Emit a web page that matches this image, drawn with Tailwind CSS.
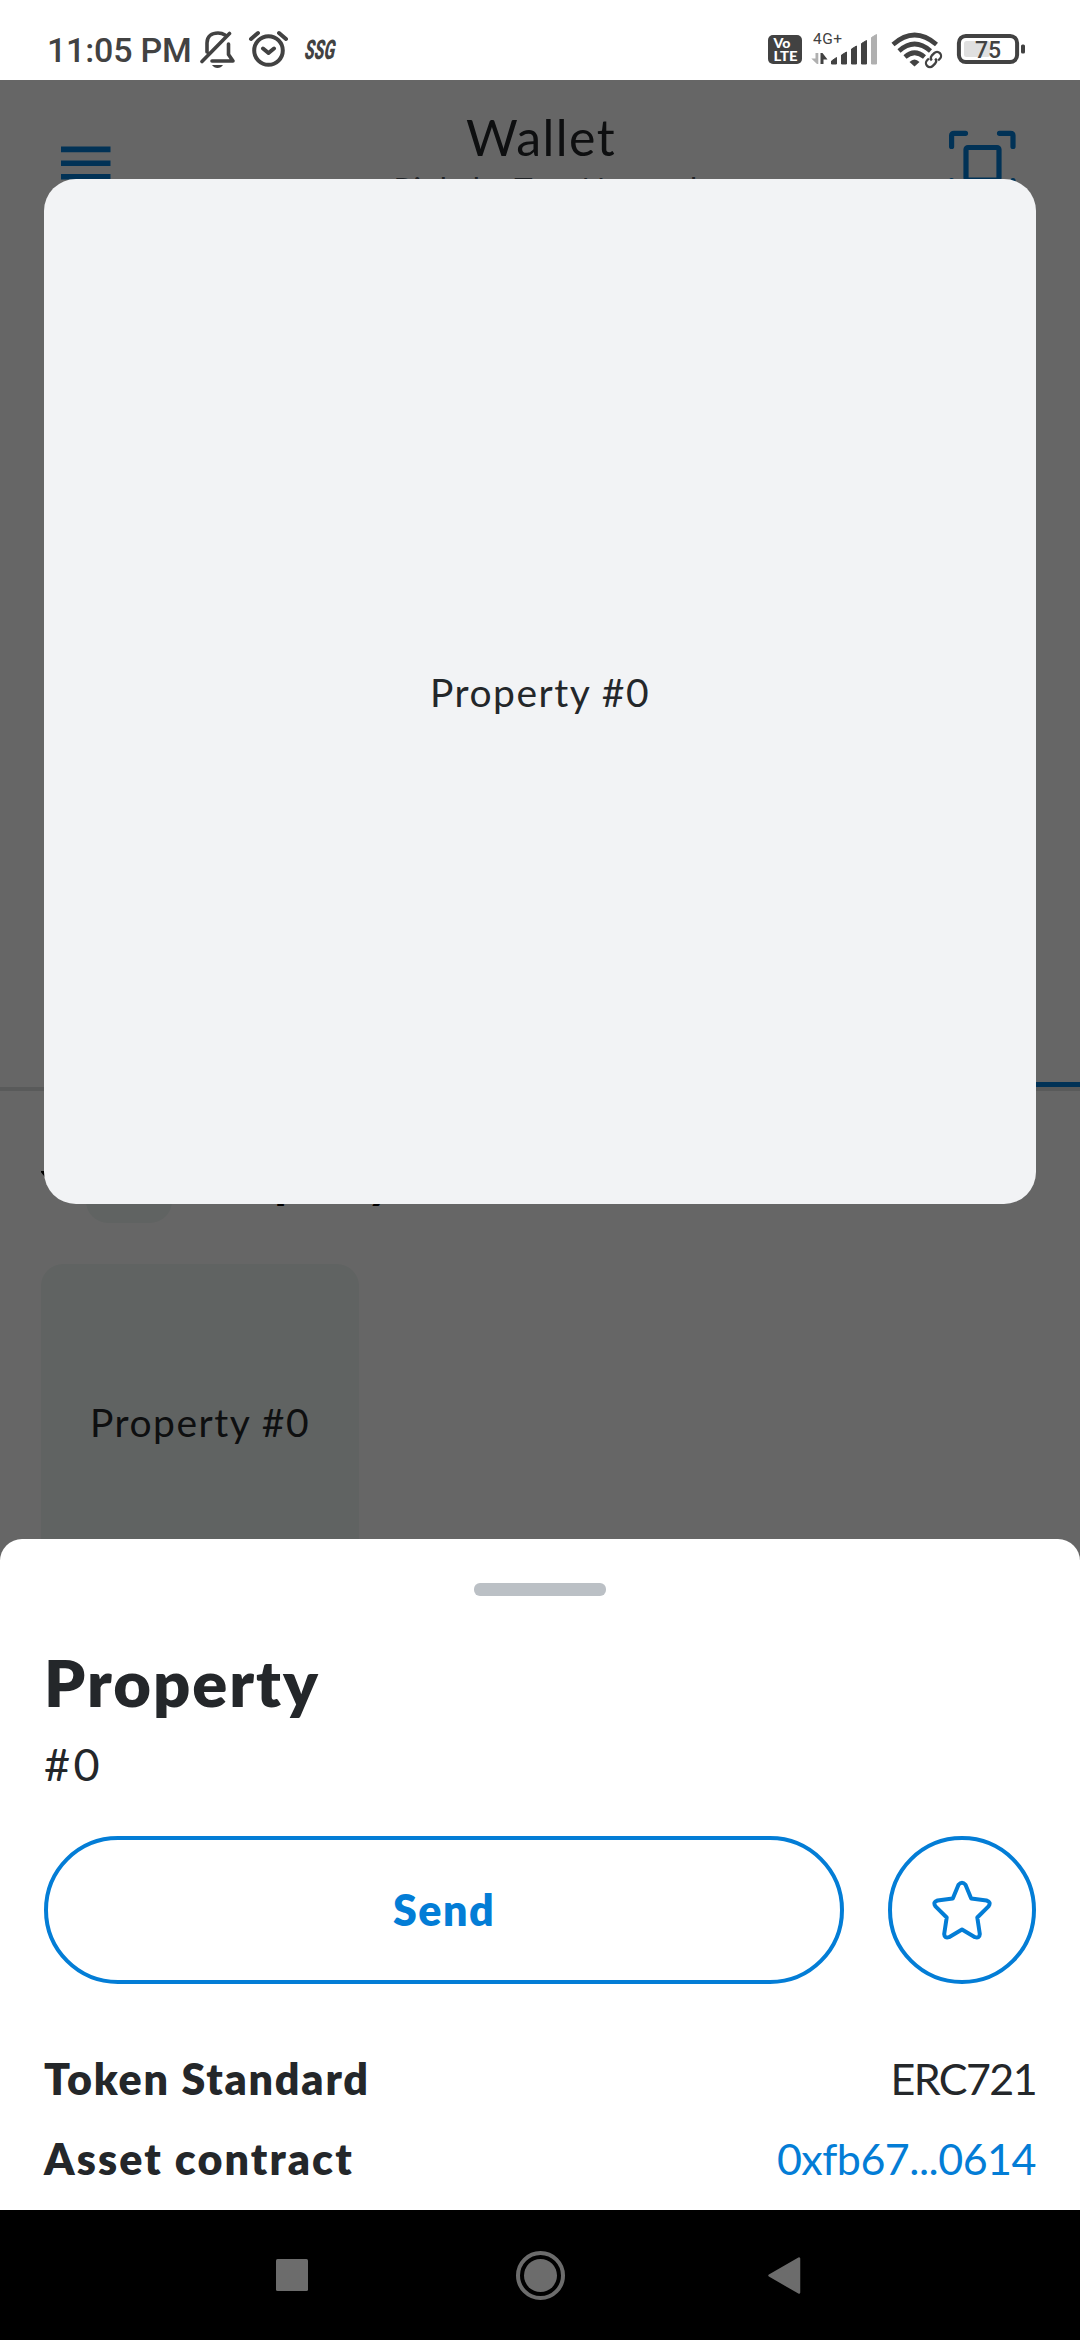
<!DOCTYPE html>
<html lang="en">
<head>
<meta charset="utf-8">
<title>Wallet</title>
<script src="https://cdn.jsdelivr.net/npm/@tailwindcss/browser@4"></script>
</head>
<body class="bg-black">
<div class="relative flex h-[2340px] w-[1080px] flex-col overflow-hidden bg-white font-['Lato',sans-serif] text-[#24272a]">

  <!-- Status bar -->
  <header class="relative z-20 flex h-20 shrink-0 items-start bg-white font-['Roboto',sans-serif] text-[#424242]">
    <div class="ml-[47px] mt-[30px] w-[153px] whitespace-nowrap text-[34px] font-medium leading-[40px] tracking-[-0.2px]">11:05 PM</div>
    <svg class="mt-[30px] h-10 w-[36px] shrink-0" viewBox="200 30 36 40" fill="none" stroke="#424242" stroke-width="3.6" stroke-linecap="round" stroke-linejoin="round">
      <path d="M207 52V43C207 36 212 33 218 33Q222 33 225 35M202 61.500L229.500 33.500M212 61H233L228.500 54.500V44"/>
      <path d="M212 65H223Q221 68 217.500 68T212 65Z" fill="#424242" stroke="none"/>
    </svg>
    <svg class="ml-[12px] mt-[30px] h-10 w-[42px] shrink-0" viewBox="248 30 42 40" fill="none" stroke="#424242" stroke-width="4" stroke-linecap="round" stroke-linejoin="round">
      <circle cx="268.500" cy="50.500" r="14.300"/><path d="M263 48.500L268.500 53L274 48.500M251 39L258 33M286 39L279 33"/>
    </svg>
    <svg class="ml-[10px] mt-[20px] h-[60px] w-[60px] shrink-0" viewBox="300 20 60 60"><text transform="translate(303.500 58.500) skewX(-12)" textLength="30" lengthAdjust="spacingAndGlyphs" font-family="Roboto" font-weight="900" font-size="27" fill="#424242">SSG</text></svg>
    <svg class="ml-auto mt-[30px] h-10 w-[262px] shrink-0" viewBox="766 30 262 40">
      <rect x="768" y="35" width="34" height="29" rx="5" fill="#424242"/>
      <text x="773.500" y="48" font-family="Lato" font-weight="900" font-size="12.500" textLength="17" lengthAdjust="spacingAndGlyphs" fill="#fff">Vo</text>
      <text x="773.500" y="60.800" font-family="Lato" font-weight="900" font-size="13.500" textLength="24" lengthAdjust="spacingAndGlyphs" fill="#fff">LTE</text>
      <text x="813" y="44" font-family="Roboto" font-size="15.500" textLength="29" fill="#424242">4G+</text>
      <path d="M815.500 53H818.300V64H817L811.300 58.500H815.500Z" fill="#b0b0b0"/>
      <path d="M820.500 53H822.500L827.500 59.500H823.500V64H820.500Z" fill="#424242"/>
      <g fill="#424242" stroke="#424242" stroke-linejoin="round">
        <path d="M831.500 61L836.500 57.500V64H831.500Z"/><path d="M841.500 55L846.500 52V64H841.500Z"/><path d="M851.500 49L856.500 46V64H851.500Z"/><path d="M861.500 43.500L866.500 40.500V64H861.500Z"/>
      </g>
      <path d="M871.500 37.500L876.500 34.500V64H871.500Z" fill="#b0b0b0" stroke="#b0b0b0" stroke-linejoin="round"/>
      <g fill="none" stroke="#424242" stroke-width="4.600">
        <path d="M893 44.500Q914.500 25.500 936.500 44.500M899 51Q914.500 37 930.500 51M905 57Q914.500 48.500 924.500 57"/>
      </g>
      <path d="M909.500 62Q914.500 57 919.500 62L914.500 66.500Z" fill="#424242"/>
      <g fill="none" stroke="#424242" stroke-width="2.300" transform="rotate(-45 933.500 59.500)">
        <path d="M931 55.500H928.500A4 4 0 0 0 928.500 63.500H932A4 4 0 0 0 935.500 60M936 63.500H938.500A4 4 0 0 0 938.500 55.500H935A4 4 0 0 0 931.500 59"/>
      </g>
      <rect x="958.900" y="35.900" width="58.200" height="26.200" rx="7" fill="none" stroke="#424242" stroke-width="4"/>
      <rect x="964" y="41" width="26" height="16" rx="2.500" fill="#e0e0e0"/>
      <rect x="1021" y="44.500" width="4" height="9" rx="1.500" fill="#424242"/>
      <text x="975" y="58" font-family="Roboto" font-weight="500" font-size="23" textLength="26" fill="#424242">75</text>
    </svg>
    <div class="w-[52px] shrink-0"></div>
  </header>

  <!-- Wallet screen under the scrim -->
  <main class="relative h-[1480px] shrink-0">
    <div class="flex h-[1002px] items-start justify-between">
      <svg class="ml-[61px] mt-[66px] h-9 w-[50px]" viewBox="0 0 50 36" fill="#037dd6"><path d="M0 .6H49.500V6.200H0ZM0 14.400H49.500V20H0ZM0 28H49.500V33.600H0Z"/></svg>
      <div class="flex flex-col items-center pt-[25px] pl-[23px]">
        <h1 class="text-[50px] leading-[64px] tracking-[1.4px]">Wallet</h1>
        <p class="pl-[18px] text-[31px] leading-[38px] tracking-[0.8px] text-[#535a61]">Rinkeby Test Network</p>
      </div>
      <svg class="mr-[62px] mt-[49px] h-[70px] w-[70px]" viewBox="0 0 70 70" fill="none" stroke="#037dd6" stroke-width="5.200" stroke-linecap="round" stroke-linejoin="round">
        <path d="M3.600 17.500V6.600Q3.600 4.300 6 4.300H17.500M51.500 4.300H62.500Q65 4.300 65 6.600V17.500M3.600 51.500V66H17.500M51.500 66H65V51.500"/><rect x="18" y="18.500" width="33" height="32.500" rx="2"/>
      </svg>
    </div>
    <div class="flex h-[9px] justify-end border-b-4 border-[#dfe0e2]"><div class="h-[5px] w-[540px] bg-[#037dd6]"></div></div>
    <div class="flex h-[173px] items-start pt-[46px]">
      <svg class="ml-[41px] mt-[34px] h-4 w-5" viewBox="0 0 20 16"><path d="M1 1H19L10 12Z" fill="#000" stroke="#000" stroke-width="2"/></svg>
      <div class="ml-[25px] h-[86px] w-[86px] rounded-[22px] bg-[#f0f7f5]"></div>
      <div class="ml-[26px] mt-[22px] text-[43px] font-extrabold leading-[48px] tracking-[3px] text-black">Property</div>
    </div>
    <div class="ml-[41px] flex h-[320px] w-[318px] items-start justify-center rounded-[22px] bg-[#f0f7f5] pt-[134px]">
      <span class="text-[39px] leading-[48px] tracking-[1.5px]">Property #0</span>
    </div>
    <div class="absolute inset-0 bg-black/60"></div>
    <!-- Collectible preview -->
    <div class="absolute left-[44px] top-[99px] flex h-[1025px] w-[992px] items-center justify-center rounded-[32px] bg-[#f2f3f5]">
      <span class="text-[39px] leading-[48px] tracking-[1.5px]">Property #0</span>
    </div>
  </main>

  <!-- Details sheet -->
  <section class="relative z-10 -mt-[21px] flex h-[671px] shrink-0 flex-col rounded-t-[22px] bg-white px-[44px]">
    <div class="mx-auto mt-[44px] h-[13px] w-[132px] shrink-0 rounded-[6px] bg-[#bbc0c5]"></div>
    <h2 class="mt-[48px] text-[65px] font-extrabold leading-[76px] tracking-[2px]">Property</h2>
    <p class="mt-[17px] text-[45px] leading-[54px] tracking-[3.5px]">#0</p>
    <div class="mt-[45px] flex gap-[44px]">
      <button class="flex h-[148px] w-[800px] items-center justify-center rounded-full border-4 border-[#037dd6] text-[43px] font-extrabold tracking-[1.5px] text-[#037dd6]">Send</button>
      <button class="flex h-[148px] w-[148px] items-center justify-center rounded-full border-4 border-[#037dd6]">
        <svg class="h-[60px] w-[60px]" viewBox="0 0 60 60" fill="none" stroke="#037dd6" stroke-width="4" stroke-linejoin="round"><path d="M26.500 4.800Q30 .8 33.500 4.800L39.200 18.500L54.500 20.500Q59.500 22 56.500 26.300L45.300 37.500L47.800 54Q47.500 58.500 43 57.200L30 49.500L17 57.200Q12.500 58.500 12.200 54L14.700 37.500L3.500 26.300Q.5 22 5.500 20.500L20.800 18.500Z"/></svg>
      </button>
    </div>
    <dl class="mt-[68px] flex flex-col gap-[26px] text-[43px] leading-[54px]">
      <div class="flex justify-between"><dt class="font-extrabold tracking-[1.8px]">Token Standard</dt><dd class="tracking-[-1.6px]">ERC721</dd></div>
      <div class="flex justify-between"><dt class="font-extrabold tracking-[2.1px]">Asset contract</dt><dd class="tracking-[-0.5px] text-[#037dd6]">0xfb67...0614</dd></div>
    </dl>
  </section>

  <!-- System navigation -->
  <nav class="flex h-[130px] shrink-0 items-center justify-center bg-black">
    <svg class="h-[130px] w-[600px]" viewBox="240 2210 600 130" fill="#6c6c6c">
      <rect x="276" y="2259" width="32" height="32" rx="1.500"/><circle cx="540.500" cy="2275.500" r="16.500"/><circle cx="540.500" cy="2275.500" r="22.500" fill="none" stroke="#6c6c6c" stroke-width="4"/><path d="M769.500 2275.500L799 2258.500V2292.500Z" stroke="#6c6c6c" stroke-width="2.500" stroke-linejoin="round"/>
    </svg>
  </nav>
</div>
</body>
</html>
